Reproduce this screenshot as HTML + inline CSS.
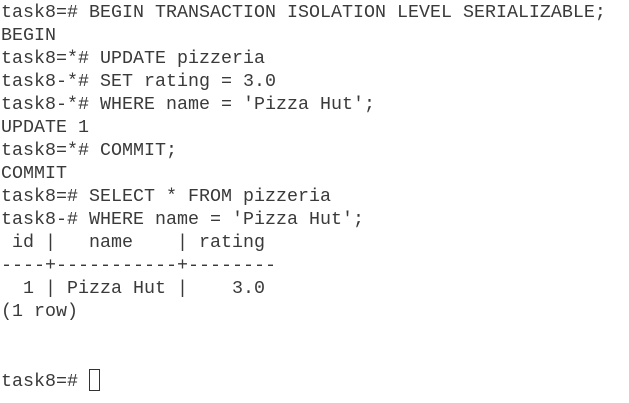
<!DOCTYPE html>
<html><head><meta charset="utf-8"><style>
html,body{margin:0;padding:0;background:#fff;width:629px;height:403px;overflow:hidden}
pre{margin:0;position:absolute;left:1px;top:1px;font-family:"Liberation Mono",monospace;font-size:18.33px;line-height:23px;color:#3a3a3a;letter-spacing:0}
.cur{display:inline-block;width:11px;height:22px;border:1.5px solid #333;vertical-align:-5px;box-sizing:border-box;margin-left:0}
</style></head><body>
<pre>task8=# BEGIN TRANSACTION ISOLATION LEVEL SERIALIZABLE;
BEGIN
task8=*# UPDATE pizzeria
task8-*# SET rating = 3.0
task8-*# WHERE name = 'Pizza Hut';
UPDATE 1
task8=*# COMMIT;
COMMIT
task8=# SELECT * FROM pizzeria
task8-# WHERE name = 'Pizza Hut';
 id |   name    | rating
----+-----------+--------
  1 | Pizza Hut |    3.0
(1 row)


task8=# <span class="cur"></span></pre>
</body></html>
